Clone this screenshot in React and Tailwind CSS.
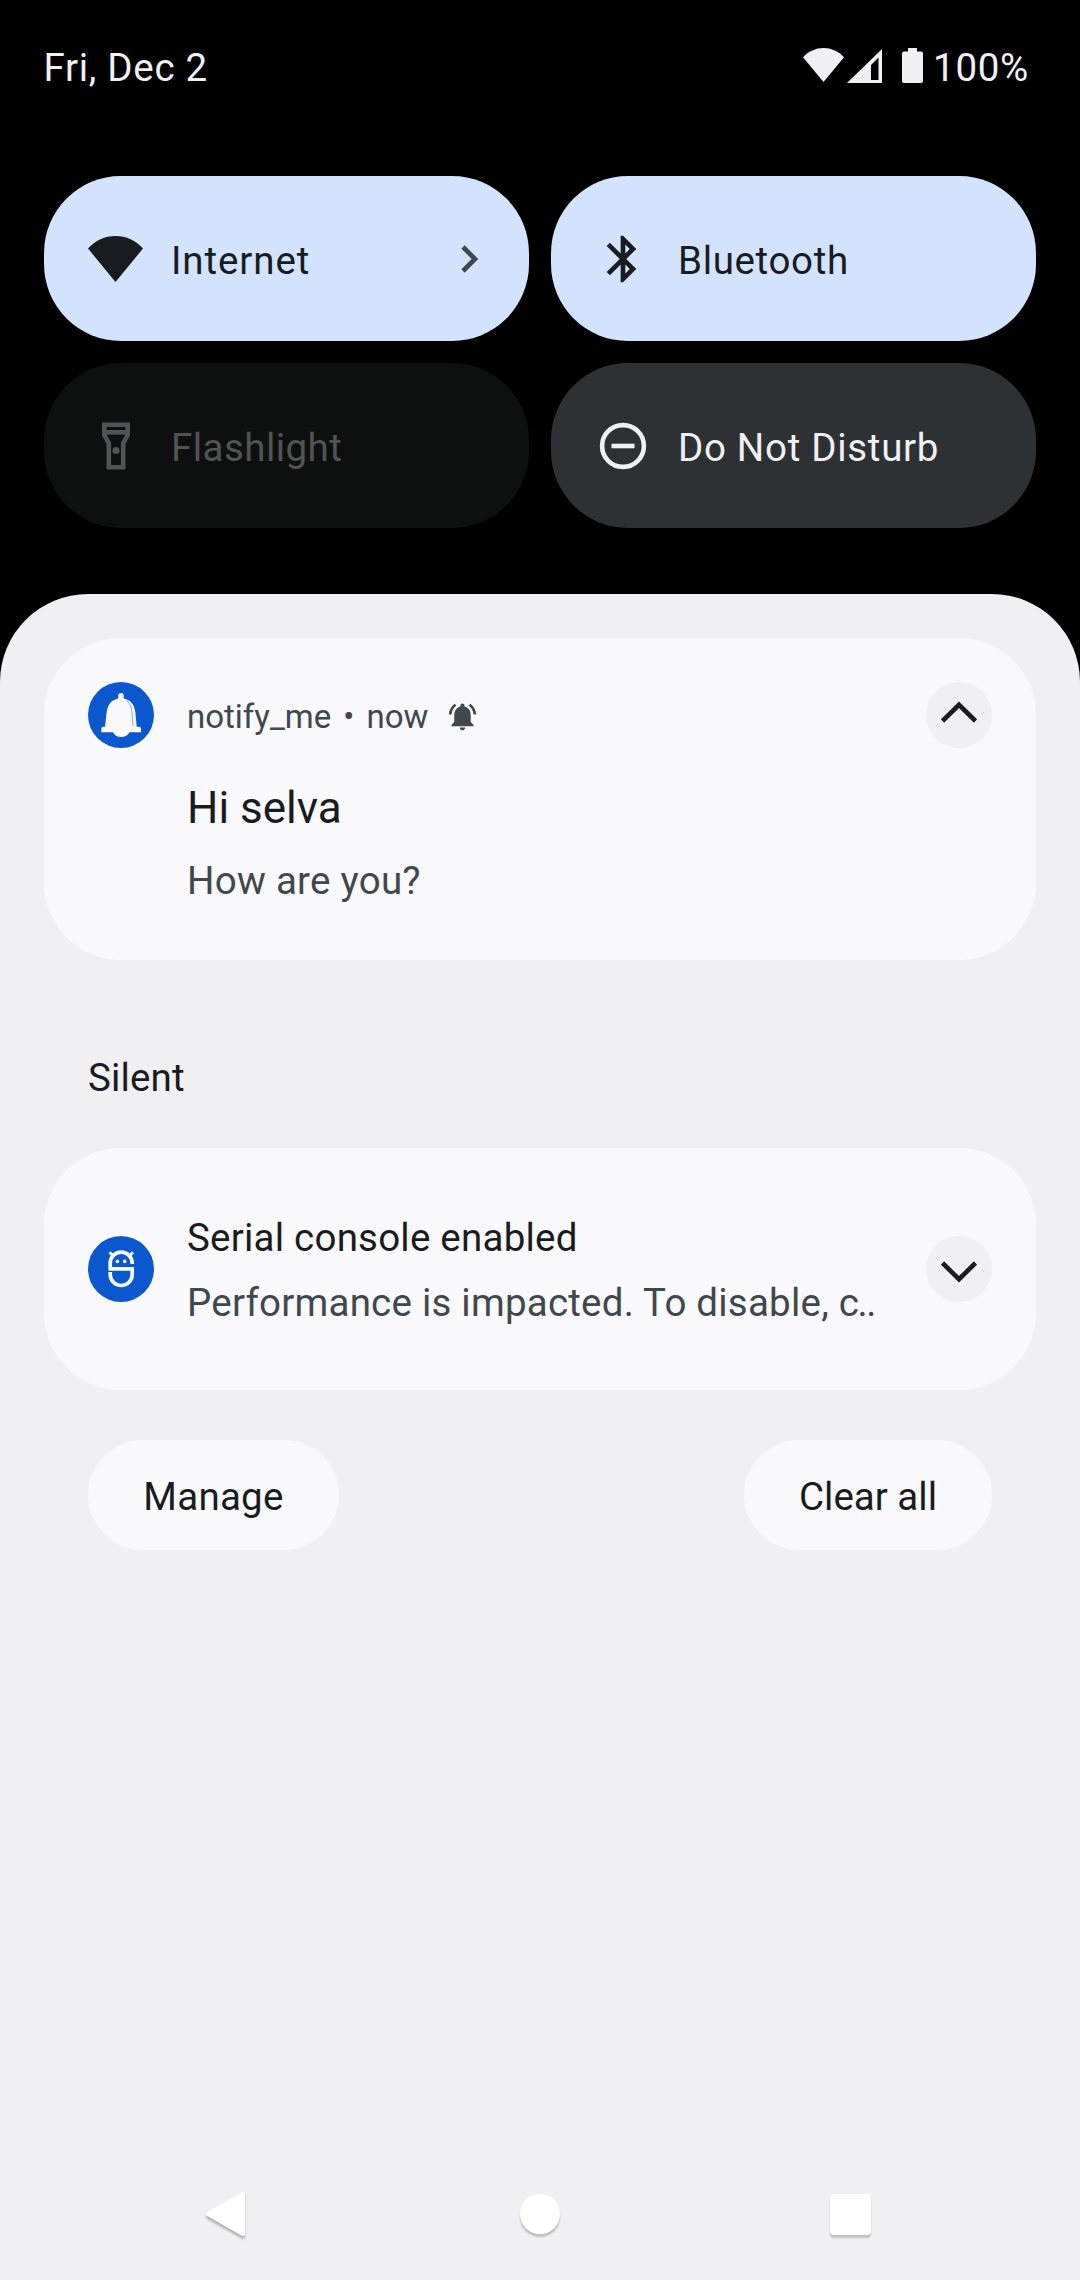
const SANS = "font-[Roboto,sans-serif]";

function WifiIcon({ className }) {
  return (
    <svg className={className} viewBox="0 0 55 46" fill="currentColor" preserveAspectRatio="none">
      <path d="M27.5 46 0 12.5C7 4.600 17 0 27.500 0S48 4.600 55 12.500Z" />
    </svg>
  );
}

function SignalIcon() {
  return (
    <svg className="h-[34px] w-[35px]" viewBox="0 0 35 34" fill="currentColor">
      <path fillRule="evenodd" d="M35 0V34H0ZM24 16V31H31.500V8.500Z" />
    </svg>
  );
}

function BatteryIcon() {
  return (
    <svg className="h-[35px] w-[21px]" viewBox="0 0 21 35" fill="currentColor">
      <path d="M6 0H15V3.500H19Q21 3.500 21 5.500V33Q21 35 19 35H2Q0 35 0 33V5.500Q0 3.500 2 3.500H6Z" />
    </svg>
  );
}

function BluetoothIcon() {
  return (
    <svg className="h-14 w-14" viewBox="0 0 24 24" fill="currentColor">
      <path d="M17.710 7.710 12 2h-1v7.590L6.410 5 5 6.410 10.590 12 5 17.590 6.410 19 11 14.410V22h1l5.710-5.710-4.300-4.290 4.300-4.290zM13 5.830l1.880 1.880L13 9.590V5.830zm1.880 10.460L13 18.170v-3.760l1.880 1.880z" />
    </svg>
  );
}

function FlashlightIcon() {
  return (
    <svg className="h-14 w-14" viewBox="0 0 56 56" fill="none" stroke="currentColor">
      <path d="M16.300 6.800H39.700V17L35.200 25V49.200H20.800V25L16.300 17Z" strokeWidth="4.600" />
      <path d="M16 14.300H40" strokeWidth="4.600" />
      <circle cx="28" cy="32.500" r="3.600" fill="currentColor" stroke="none" />
    </svg>
  );
}

function DndIcon() {
  return (
    <svg className="h-14 w-14" viewBox="0 0 56 56" fill="none" stroke="currentColor" strokeWidth="4.600">
      <circle cx="28" cy="28" r="20.900" />
      <path d="M16.500 28H39.500" />
    </svg>
  );
}

function AppBellIcon() {
  return (
    <svg className="size-[66px]" viewBox="0 0 66 66" fill="#f9f9fc">
      <path d="M30.300 16.500V13.700A2.700 2.700 0 0 1 35.700 13.700V16.500C43 18 46.500 23 47.300 30L48.700 44.700H51Q53 44.700 53 47V50.300H41.500C40 53.500 37 55 33 55S26.500 53.500 25 50.300H13.300V47Q13.300 44.700 15.300 44.700H17L18.700 30C19.500 23 23 18 30.300 16.500Z" />
      <path d="M38.500 18.500C42 21 43.500 25 44 31L45 44" fill="none" stroke="#0b57d0" strokeWidth=".5" />
    </svg>
  );
}

function SerialIcon() {
  return (
    <svg className="size-[66px]" viewBox="0 0 66 66" fill="none" stroke="#f9f9fc" strokeWidth="3.700">
      <path d="M44.200 28V27.200A11 11 0 0 0 22.200 27.200V32.800H44.200V38.500A11 11 0 0 1 22.200 38.500V36" />
      <path d="M21.500 16.300 25 19.800M45 16.300 41.500 19.800" strokeWidth="3" />
      <circle cx="29.400" cy="25.400" r="1.800" fill="#f9f9fc" stroke="none" />
      <circle cx="36.700" cy="25.400" r="1.800" fill="#f9f9fc" stroke="none" />
    </svg>
  );
}

function AlertBellIcon() {
  return (
    <svg className="size-[33px]" viewBox="0 0 24 24" fill="currentColor">
      <path d="M7.580 4.080 6.150 2.650C3.750 4.480 2.170 7.300 2.030 10.500h2c.15-2.650 1.510-4.970 3.550-6.420zm12.390 6.420h2c-.15-3.200-1.730-6.020-4.120-7.850l-1.420 1.430c2.020 1.450 3.390 3.770 3.540 6.420zM18 11c0-3.070-1.640-5.640-4.500-6.320V4c0-.83-.67-1.500-1.500-1.500s-1.500.67-1.500 1.500v.68C7.630 5.360 6 7.920 6 11v5l-2 2v1h16v-1l-2-2v-5zm-6 11c.14 0 .27-.01.4-.04.65-.14 1.180-.58 1.440-1.180.1-.24.15-.5.150-.78h-4c.01 1.100.9 2 2.010 2z" />
    </svg>
  );
}

function Tile({ icon, label, className, chevron }) {
  return (
    <div className={`flex h-[165px] items-center rounded-[77px] pl-[43.5px] ${className}`}>
      <span className="flex w-14 justify-center">{icon}</span>
      <span className="ml-[27.5px] pt-[3px] text-[38.5px] leading-[45px]">{label}</span>
      {chevron && (
        <svg className="mr-[50px] ml-auto h-[28px] w-[18px] text-[#41484d]" viewBox="0 0 18 28" fill="none" stroke="currentColor" strokeWidth="4.600">
          <path d="M2 2 14 14 2 26" />
        </svg>
      )}
    </div>
  );
}

function ExpandButton({ up }) {
  return (
    <button className="flex size-[66px] shrink-0 items-center justify-center rounded-full bg-[#f0f0f2] text-[#191c1e]">
      <svg className="size-[66px]" viewBox="0 0 66 66" fill="none" stroke="currentColor" strokeWidth="4.600">
        <path d={up ? "M16.500 39 33 22.800 49.500 39" : "M16.500 27 33 43.200 49.500 27"} />
      </svg>
    </button>
  );
}

export default function App() {
  return (
    <div className={`flex h-[2280px] w-[1080px] flex-col overflow-hidden bg-black ${SANS}`}>
      <header className="flex h-[176px] items-start justify-between pt-[45px] pr-[51px] pl-[43.5px] text-[#f0f0f2]">
        <span className="text-[38.5px] leading-[45px] tracking-[0.7px]">Fri, Dec 2</span>
        <div className="flex items-start">
          <WifiIcon className="mt-[3px] h-[34px] w-[41px]" />
          <div className="mt-[4px] ml-[3px]"><SignalIcon /></div>
          <div className="mt-[3px] ml-[20px]"><BatteryIcon /></div>
          <span className="ml-[10px] text-[38.5px] leading-[45px] tracking-[0.7px]">100%</span>
        </div>
      </header>

      <section className="grid grid-cols-2 gap-[22px] px-[44px]">
        <Tile icon={<WifiIcon className="h-[46px] w-[55px]" />} label="Internet" chevron className="bg-[#d3e3fd] tracking-[0.9px] text-[#191c1e]" />
        <Tile icon={<BluetoothIcon />} label="Bluetooth" className="bg-[#d3e3fd] tracking-[0.65px] text-[#191c1e]" />
        <Tile icon={<FlashlightIcon />} label="Flashlight" className="bg-[#0e100f] tracking-[0.45px] text-[#525354]" />
        <Tile icon={<DndIcon />} label="Do Not Disturb" className="bg-[#2e3133] tracking-[0.7px] text-[#f0f0f2]" />
      </section>

      <main className="mt-[66px] flex flex-1 flex-col rounded-t-[88px] bg-[#f0f0f2] px-[44px] pt-[44px]">
        <article className="flex h-[322px] items-start rounded-[77px] bg-[#f9f9fc] px-[44px] pt-[44px]">
          <span className="rounded-full bg-[#0b57d0]"><AppBellIcon /></span>
          <div className="ml-[33px] flex-1">
            <div className="flex h-[66px] items-center pt-[3px] text-[33px] leading-[39px] text-[#41484d]">
              <span>notify_me</span>
              <span className="mx-[12px]">•</span>
              <span>now</span>
              <span className="ml-[18px]"><AlertBellIcon /></span>
            </div>
            <h2 className="mt-[34px] text-[44px] leading-[52px] text-[#191c1e]">Hi selva</h2>
            <p className="mt-[24px] text-[38.5px] leading-[45px] tracking-[0.25px] text-[#41484d]">How are you?</p>
          </div>
          <ExpandButton up />
        </article>

        <h3 className="mt-[95px] ml-[44px] text-[38.5px] leading-[45px] tracking-[0.15px] text-[#191c1e]">Silent</h3>

        <article className="mt-[48px] flex h-[242px] items-center rounded-[77px] bg-[#f9f9fc] px-[44px]">
          <span className="rounded-full bg-[#0b57d0]"><SerialIcon /></span>
          <div className="ml-[33px] flex-1 pt-[2px] text-[38.5px] leading-[45px] tracking-[0.22px] whitespace-nowrap">
            <h2 className="text-[#191c1e]">Serial console enabled</h2>
            <p className="mt-[20px] text-[#41484d]">
              Performance is impacted. To disable, <span className="tracking-[-1.4px]">c..</span>
            </p>
          </div>
          <ExpandButton />
        </article>

        <div className="mt-[50px] flex justify-between px-[44px] text-[38.5px] leading-[45px] text-[#191c1e]">
          <button className="h-[110px] w-[251px] rounded-full bg-[#f9f9fc] pt-[2px] tracking-[0.25px]">Manage</button>
          <button className="h-[110px] w-[248px] rounded-full bg-[#f9f9fc] pt-[2px]">Clear all</button>
        </div>

        <nav className="mt-auto mb-[38px] grid grid-cols-3 items-center">
          <svg className="ml-[150px] size-[56px] drop-shadow-[0_3px_1px_rgba(0,0,0,0.25)]" viewBox="0 0 56 56" fill="#fff" stroke="#fff" strokeWidth="4" strokeLinejoin="round">
            <path d="M14 28 49 8V48Z" />
          </svg>
          <span className="size-[40px] justify-self-center rounded-full bg-white shadow-[0_3px_2px_rgba(0,0,0,0.2)]" />
          <span className="ml-[125px] size-[41px] rounded-[4px] bg-white shadow-[0_3px_2px_rgba(0,0,0,0.2)]" />
        </nav>
      </main>
    </div>
  );
}
